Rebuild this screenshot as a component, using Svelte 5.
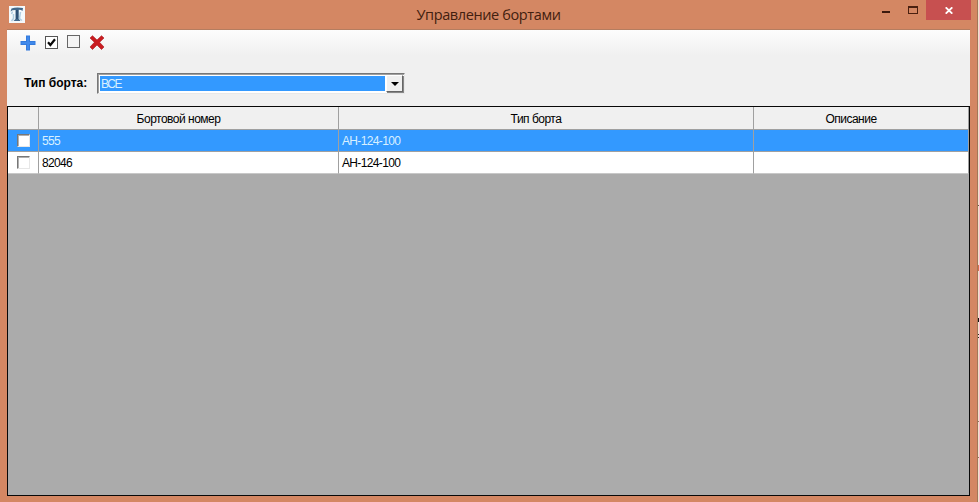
<script>
  let rows = $state([
    { number: '555', type: 'АН-124-100', note: '', selected: true },
    { number: '82046', type: 'АН-124-100', note: '', selected: false }
  ]);
  function select(row) {
    for (const r of rows) r.selected = r === row;
  }
</script>

<div class="screen">
  <div class="window">
    <header class="titlebar">
      <svg class="app-icon" width="16" height="17" viewBox="0 0 16 17">
        <rect width="16" height="17" fill="#f4f8fb" />
        <path d="M1.500 5.500L2.500 2.500Q7 .8 14 2L13.500 5L12 4L9.800 3.700V12.800L11.500 15H4.500L6.500 13V3.900L3.500 4.200Z" fill="#44698a" />
        <path d="M3.500 5.500L2.500 8M11.500 6L10.500 12.500L13 14.500M4.500 8V12.500L2.500 15" stroke="#b0cde0" stroke-width="1.500" fill="none" />
        <path d="M8 4V13" stroke="#183b60" stroke-width="1" />
      </svg>
      <h1>Управление бортами</h1>
      <div class="controls">
        <button class="min" aria-label="Свернуть"><i></i></button>
        <button class="max" aria-label="Развернуть"><i></i></button>
        <button class="close" aria-label="Закрыть">
          <svg width="8" height="7" viewBox="0 0 8 7"><path d="M.7 .3L7.300 6.700M7.300 .3L.7 6.700" stroke="#fff" stroke-width="1.800" /></svg>
        </button>
      </div>
    </header>

    <main>
      <div class="toolbar">
        <svg class="plus" width="16" height="16" viewBox="0 0 16 16">
          <path d="M6 .5H10V6H15.500V10H10V15.500H6V10H.5V6H6Z" fill="#347bdd" />
          <path d="M7 1.500H9V7H14.500V9H9V14.500H7V9H1.500V7H7Z" fill="#4089eb" />
        </svg>
        <svg class="checked" width="13" height="13" viewBox="0 0 13 13">
          <rect x=".5" y=".5" width="12" height="12" fill="#fff" stroke="#555" />
          <path d="M3 6.300L5.400 9L10 3.300" stroke="#080808" stroke-width="2.200" fill="none" />
        </svg>
        <svg class="unchecked" width="13" height="13" viewBox="0 0 13 13">
          <rect x=".5" y=".5" width="12" height="12" fill="#f4f4f4" stroke="#666" />
        </svg>
        <svg class="delete" width="16" height="15" viewBox="0 0 16 15">
          <path d="M1 3L3.500 .7L8 5L12.500 .7L15 3L10.600 7.300L15 12L12.500 14.500L8 10L3.500 14.500L1 12L5.400 7.300Z" fill="#c91c20" stroke="#aa181c" stroke-width=".6" />
        </svg>
      </div>

      <div class="filter">
        <span class="label">Тип борта:</span>
        <div class="combo">
          <span class="value">ВСЕ</span>
          <span class="arrow"><svg width="8" height="4" viewBox="0 0 8 4"><path d="M0 0H8L4 4Z" fill="#000" /></svg></span>
        </div>
      </div>

      <div class="grid">
        <div class="row head">
          <div></div>
          <div>Бортовой номер</div>
          <div>Тип борта</div>
          <div>Описание</div>
        </div>
        {#each rows as row}
          <!-- svelte-ignore a11y_click_events_have_key_events, a11y_no_static_element_interactions -->
          <div class="row" class:selected={row.selected} onclick={() => select(row)}>
            <div class="check"><i></i></div>
            <div>{row.number}</div>
            <div>{row.type}</div>
            <div>{row.note}</div>
          </div>
        {/each}
      </div>
    </main>
  </div>
  <div class="backdrop">
    {#each [[205, 1, '#6b5a48'], [265, 6, '#d8704c'], [318, 4, '#15110e'], [334, 1, '#302820'], [337, 1, '#302820'], [421, 1, '#97765a'], [457, 1, '#97765a']] as [top, height, color]}
      <i style="top:{top}px;height:{height}px;background:{color}"></i>
    {/each}
  </div>
</div>

<style>
  * { box-sizing: border-box; }
  .screen {
    display: flex;
    width: 979px;
    height: 502px;
    overflow: hidden;
    font: 12px/13px "Liberation Sans", Arial, sans-serif;
    color: #000;
  }
  .window {
    width: 978px;
    background: #d48763;
    border-right: 1px solid #a37658;
    padding: 0 7px 6px;
  }
  .backdrop { position: relative; width: 1px; background: #f0e2cd; }
  .backdrop i { position: absolute; left: 0; width: 1px; }
  .titlebar {
    display: grid;
    grid-template-columns: 120px 1fr 120px;
    height: 30px;
    border-bottom: 1px solid #b47d60;
  }
  .app-icon { margin: 6px 0 0 2px; }
  h1 {
    margin: 5px 0 0;
    text-align: center;
    font: 400 14.5px/20px "Open Sans", "Noto Sans", sans-serif;
    letter-spacing: -.38px;
    color: #42200f;
  }
  .controls { display: flex; margin-right: -1px; justify-content: flex-end; }
  button { border: 0; padding: 0; background: none; display: block; }
  .min, .max { height: 20px; }
  .min { width: 26px; }
  .max { width: 25px; }
  .min i { display: block; width: 8px; height: 2px; margin: 4px 0 0 7px; background: #3b190d; }
  .max i { display: block; width: 10px; height: 8px; border: 1px solid #4a2010; border-top-width: 2px; margin: 0 0 0 7px; }
  .close { width: 45px; height: 20px; background: #c75050; }
  .close svg { display: block; margin: 1px auto 0; }
  main {
    display: flex;
    flex-direction: column;
    width: 963px;
    height: 466px;
    background: #f0f0f0;
  }
  .toolbar {
    display: flex;
    height: 25px;
    padding-left: 13px;
    background: linear-gradient(#fdfdfd, #f0f0f0);
  }
  .plus { margin-top: 5px; }
  .checked { margin: 6px 0 0 9px; }
  .unchecked { margin: 5px 0 0 9px; }
  .delete { margin: 5px 0 0 9px; }
  .filter { display: flex; height: 51px; padding-left: 17px; }
  .label { width: 73px; padding-top: 22px; font-weight: 700; letter-spacing: 0; white-space: nowrap; }
  .combo {
    display: flex;
    width: 308px;
    height: 21px;
    margin-top: 18px;
    padding: 1px;
    background: #fff;
    border: 1px solid;
    border-color: #777 #e8e8e8 #e8e8e8 #777;
    box-shadow: inset 1px 1px #a0a0a0;
  }
  .value { flex: 1; margin: 1px; padding: 2px 1px 0; background: #39f; color: #d9f0ff; letter-spacing: -1.4px; }
  .arrow {
    width: 17px;
    display: grid;
    place-items: center;
    background: #f0f0f0;
    border: 1px solid;
    border-color: #fff #666 #666 #fff;
    box-shadow: 1px 1px #888;
  }
  .grid { flex: 1; border: 1px solid #080808; background: #ababab; }
  .row {
    display: grid;
    grid-template-columns: 31px 300px 415px 215px;
    width: 961px;
    height: 22px;
    background: #fff;
    letter-spacing: -.65px;
  }
  .row > div { border-right: 1px solid #a0a0a0; border-bottom: 1px solid #a0a0a0; padding: 5px 3px 0; }
  .row:last-child > div { border-bottom-color: #c8c8c8; }
  .row.head { height: 23px; background: #f0f0f0; letter-spacing: -.5px; }
  .head > div { text-align: center; padding: 6px 23px 0 3px; }
  .selected { background: #39f; color: #d9f0ff; }
  .row > .check { padding: 4px 0 0 9px; }
  .check i { display: block; width: 13px; height: 13px; background: #fff; border: 1px solid; border-color: #777 #e7e7e7 #e7e7e7 #777; box-shadow: inset 1px 1px #b0b0b0; }
</style>
